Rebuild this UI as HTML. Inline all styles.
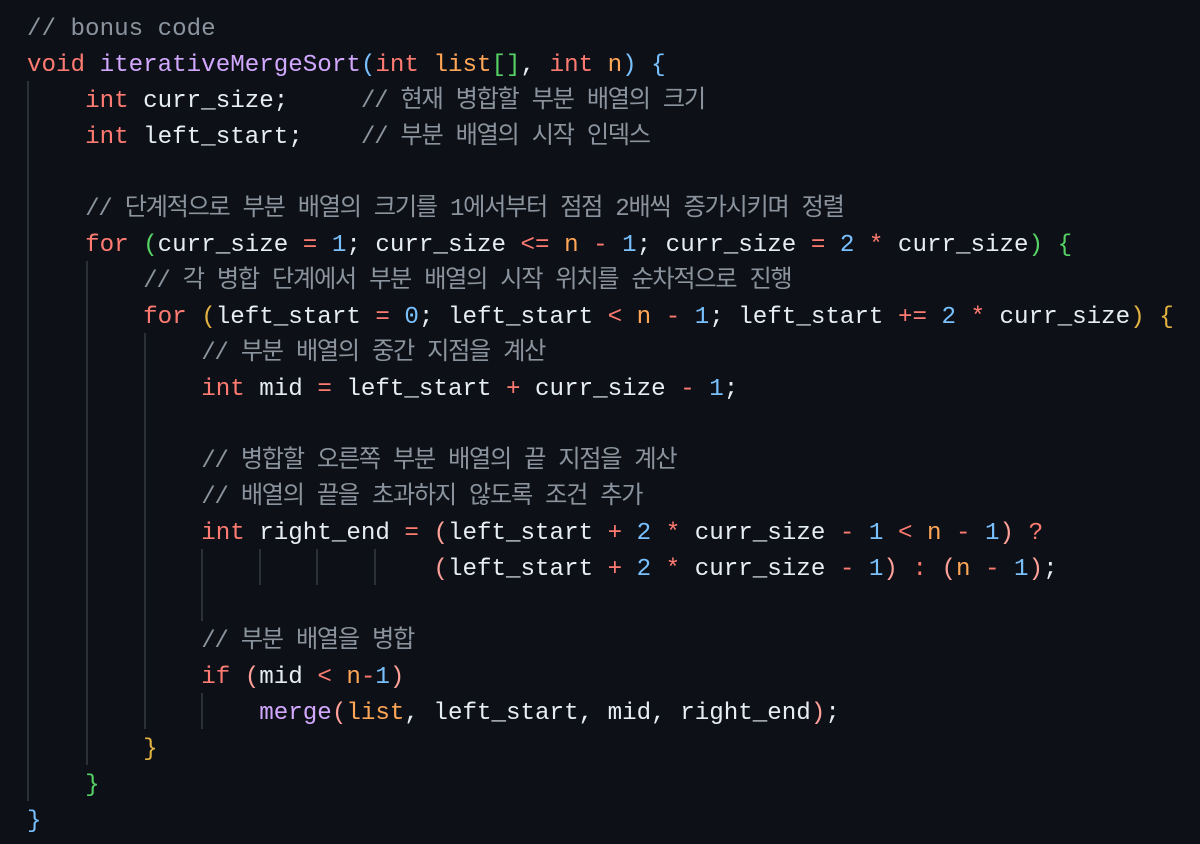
<!DOCTYPE html>
<html><head><meta charset="utf-8"><style>
html,body{margin:0;padding:0;background:#0d1117;width:1200px;height:844px;overflow:hidden}
pre{margin:0;position:absolute;left:27px;top:12px;font-family:"Liberation Mono","Noto Sans CJK KR",monospace;font-size:24.2px;line-height:36px;color:#e6edf3}
.c{color:#8b949e}.ck{color:#8b949e;letter-spacing:-1.3px}.k{color:#ff7b72}.f{color:#d2a8ff}.p{color:#ffa657}.n{color:#79c0ff}.o{color:#ff7b72}
.b1{color:#79c0ff}.b2{color:#56d364}.b3{color:#e3b341}.b4{color:#ffa198}
.g{position:absolute;width:2px;background:#2b3038}
</style></head><body>
<div class="g" style="left:27px;top:81px;height:720px"></div>
<div class="g" style="left:86px;top:261px;height:504px"></div>
<div class="g" style="left:144px;top:333px;height:396px"></div>
<div class="g" style="left:201px;top:549px;height:72px"></div>
<div class="g" style="left:259px;top:549px;height:36px"></div>
<div class="g" style="left:316px;top:549px;height:36px"></div>
<div class="g" style="left:374px;top:549px;height:36px"></div>
<div class="g" style="left:201px;top:693px;height:36px"></div>
<pre><span class="c">// bonus code</span>
<span class="k">void</span> <span class="f">iterativeMergeSort</span><span class="b1">(</span><span class="k">int</span> <span class="p">list</span><span class="b2">[]</span>, <span class="k">int</span> <span class="p">n</span><span class="b1">)</span> <span class="b1">{</span>
    <span class="k">int</span> curr_size;     <span class="ck">// 현재 병합할 부분 배열의 크기</span>
    <span class="k">int</span> left_start;    <span class="ck">// 부분 배열의 시작 인덱스</span>

    <span class="ck">// 단계적으로 부분 배열의 크기를 1에서부터 점점 2배씩 증가시키며 정렬</span>
    <span class="k">for</span> <span class="b2">(</span>curr_size <span class="o">=</span> <span class="n">1</span>; curr_size <span class="o">&lt;=</span> <span class="p">n</span> <span class="o">-</span> <span class="n">1</span>; curr_size <span class="o">=</span> <span class="n">2</span> <span class="o">*</span> curr_size<span class="b2">)</span> <span class="b2">{</span>
        <span class="ck">// 각 병합 단계에서 부분 배열의 시작 위치를 순차적으로 진행</span>
        <span class="k">for</span> <span class="b3">(</span>left_start <span class="o">=</span> <span class="n">0</span>; left_start <span class="o">&lt;</span> <span class="p">n</span> <span class="o">-</span> <span class="n">1</span>; left_start <span class="o">+=</span> <span class="n">2</span> <span class="o">*</span> curr_size<span class="b3">)</span> <span class="b3">{</span>
            <span class="ck">// 부분 배열의 중간 지점을 계산</span>
            <span class="k">int</span> mid <span class="o">=</span> left_start <span class="o">+</span> curr_size <span class="o">-</span> <span class="n">1</span>;

            <span class="ck">// 병합할 오른쪽 부분 배열의 끝 지점을 계산</span>
            <span class="ck">// 배열의 끝을 초과하지 않도록 조건 추가</span>
            <span class="k">int</span> right_end <span class="o">=</span> <span class="b4">(</span>left_start <span class="o">+</span> <span class="n">2</span> <span class="o">*</span> curr_size <span class="o">-</span> <span class="n">1</span> <span class="o">&lt;</span> <span class="p">n</span> <span class="o">-</span> <span class="n">1</span><span class="b4">)</span> <span class="o">?</span>
                            <span class="b4">(</span>left_start <span class="o">+</span> <span class="n">2</span> <span class="o">*</span> curr_size <span class="o">-</span> <span class="n">1</span><span class="b4">)</span> <span class="o">:</span> <span class="b4">(</span><span class="p">n</span> <span class="o">-</span> <span class="n">1</span><span class="b4">)</span>;

            <span class="ck">// 부분 배열을 병합</span>
            <span class="k">if</span> <span class="b4">(</span>mid <span class="o">&lt;</span> <span class="p">n</span><span class="o">-</span><span class="n">1</span><span class="b4">)</span>
                <span class="f">merge</span><span class="b4">(</span><span class="p">list</span>, left_start, mid, right_end<span class="b4">)</span>;
        <span class="b3">}</span>
    <span class="b2">}</span>
<span class="b1">}</span></pre>
</body></html>
